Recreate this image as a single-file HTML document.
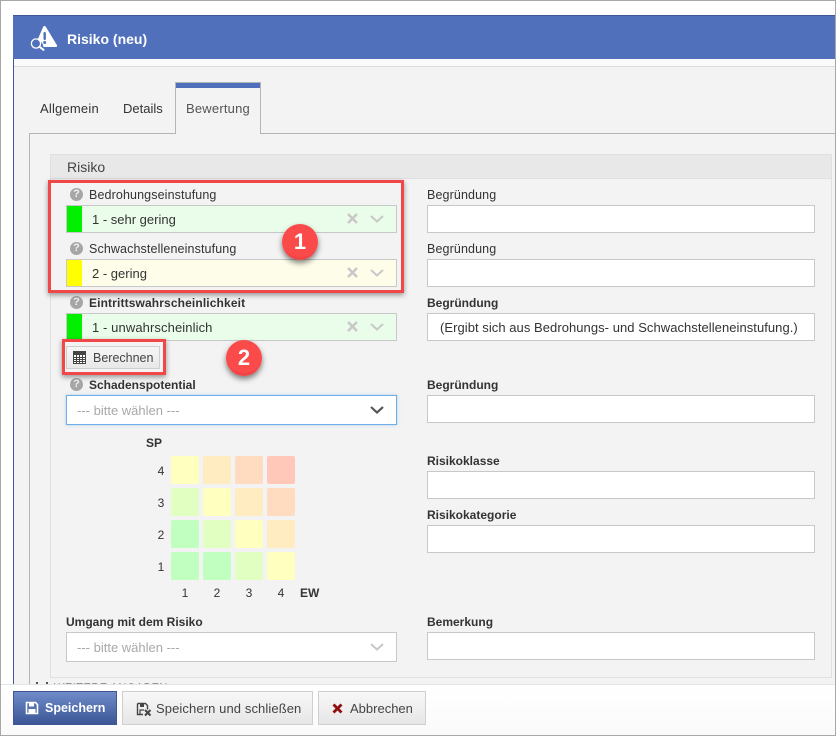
<!DOCTYPE html>
<html lang="de"><head><meta charset="utf-8"><title>Risiko (neu)</title>
<style>
*{box-sizing:border-box}
html,body{margin:0;padding:0;width:836px;height:736px;overflow:hidden;background:#fff}
body{position:relative;font-family:"Liberation Sans",sans-serif;font-size:13px;color:#333}
.a{position:absolute}
.t{position:absolute;white-space:nowrap;line-height:16px}
.lb{font-size:12.5px;color:#333;letter-spacing:.12px}
.b{font-weight:bold;font-size:12px;color:#333}
.in{position:absolute;background:#fff;border:1px solid #c8c8c8;height:28px}
.sel{position:absolute;left:66px;width:331px;height:28px;border:1px solid #c8c8c8}
.sw{position:absolute;left:0;top:0;width:15px;height:26px}
.sel .v{position:absolute;left:25px;top:6px;line-height:16px;font-size:13px;color:#333;white-space:nowrap}
.q{position:absolute;left:70px;width:13px;height:13px;border-radius:50%;background:#a6a6a6;color:#f3f3f3;font:bold 11px/13px "Liberation Sans",sans-serif;text-align:center}
.c{position:absolute;width:28px;height:28px;border-radius:2px}
.n{position:absolute;font-size:12px;line-height:14px;color:#333;width:14px;text-align:center}
.badge{position:absolute;width:36px;height:36px;border-radius:50%;background:radial-gradient(circle at 50% 35%,#fb4a4a 65%,#d92f35 100%);box-shadow:0 3px 6px rgba(0,0,0,.5);color:#fff;font:bold 22px/35px "Liberation Sans",sans-serif;text-align:center}
.btn{position:absolute;top:691px;height:34px;border:1px solid #cfcfcf;background:linear-gradient(#f8f8f8,#e6e6e6);color:#444;font-size:13px;line-height:33px;white-space:nowrap}
</style></head><body>
<!-- outer frame -->
<div class="a" style="left:0;top:0;width:836px;height:736px;border:1px solid #a8a8a8"></div>
<!-- dialog -->
<div class="a" style="left:13px;top:15px;width:822px;height:669px;background:#f3f3f3;border-left:1px solid #3f5595"></div>
<div class="a" style="left:13px;top:15px;width:822px;height:44px;background:#5070bb;border-top:1px solid #3f5595"></div>
<div class="a" style="left:14px;top:59px;width:821px;height:8px;background:#fafafa;border-bottom:1px solid #dcdcdc"></div>
<svg class="a" style="left:30px;top:25px" width="28" height="27" viewBox="0 0 28 27">
<path d="M14.500 1c.6 0 1 .3 1.300.8L27 20.300c.5.800 0 1.700-.9 1.700H13.500a7.500 7.500 0 0 0-6-7L13.200 1.800c.3-.5.700-.8 1.300-.8z" fill="#fff"/>
<rect x="13.500" y="7" width="2.400" height="8" rx="1" fill="#5070bb"/><circle cx="14.700" cy="17.500" r="1.500" fill="#5070bb"/>
<circle cx="6" cy="18.500" r="4.600" fill="none" stroke="#fff" stroke-width="1.300"/><path d="M9.500 21.800l4 3" stroke="#fff" stroke-width="2" stroke-linecap="round"/>
</svg>
<div class="t" style="left:67px;top:31px;font-size:14px;font-weight:bold;color:#fff">Risiko (neu)</div>

<!-- tabs -->
<div class="a" style="left:29px;top:133px;width:806px;height:551px;border-left:1px solid #b5b5b5;border-top:1px solid #b5b5b5"></div>
<div class="a" style="left:175px;top:82px;width:86px;height:52px;background:#f3f3f3;border:1px solid #b5b5b5;border-bottom:none"></div>
<div class="a" style="left:176px;top:83px;width:84px;height:5px;background:#5070bb"></div>
<div class="t" style="left:40px;top:101px;color:#333;letter-spacing:.2px">Allgemein</div>
<div class="t" style="left:123px;top:101px;color:#333">Details</div>
<div class="t" style="left:186px;top:101px;color:#555;letter-spacing:.2px">Bewertung</div>

<!-- behind footer -->
<div class="t" style="left:54px;top:681px;font-size:11px;color:#333;height:3px;overflow:hidden;line-height:14px;letter-spacing:.5px">WEITERE ANGABEN</div>
<div class="a" style="left:36px;top:682px;width:2px;height:2px;background:#555"></div>
<div class="a" style="left:46px;top:682px;width:2px;height:2px;background:#555"></div>

<!-- fieldset -->
<div class="a" style="left:50px;top:154px;width:782px;height:524px;border:1px solid #e0e0e0;background:#f3f3f3"></div>
<div class="a" style="left:51px;top:155px;width:780px;height:24px;background:#e8e8e8;border-bottom:1px solid #e0e0e0"></div>
<div class="t" style="left:67px;top:159px;font-size:14px;color:#444">Risiko</div>

<!-- left col -->
<div class="q" style="top:188px">?</div><div class="t lb" style="left:89px;top:187px">Bedrohungseinstufung</div>
<div class="sel" style="top:205px;background:#eafdea"><div class="sw" style="background:#00f000"></div><div class="v">1 - sehr gering</div>
<svg class="a" style="left:280px;top:7px" width="40" height="12"><path d="M1 1l9 9M10 1l-9 9" stroke="#c8c8c8" stroke-width="2.600"/><path d="M24 3l6 5.500L36 3" fill="none" stroke="#c8c8c8" stroke-width="2"/></svg></div>

<div class="q" style="top:242px">?</div><div class="t lb" style="left:89px;top:241px">Schwachstelleneinstufung</div>
<div class="sel" style="top:259px;background:#fdfdea"><div class="sw" style="background:#ffff00"></div><div class="v">2 - gering</div>
<svg class="a" style="left:280px;top:7px" width="40" height="12"><path d="M1 1l9 9M10 1l-9 9" stroke="#c8c8c8" stroke-width="2.600"/><path d="M24 3l6 5.500L36 3" fill="none" stroke="#c8c8c8" stroke-width="2"/></svg></div>

<div class="q" style="top:296px">?</div><div class="t b" style="left:89px;top:295px;letter-spacing:.13px">Eintrittswahrscheinlichkeit</div>
<div class="sel" style="top:313px;background:#eafdea"><div class="sw" style="background:#00f000"></div><div class="v" style="letter-spacing:.1px">1 - unwahrscheinlich</div>
<svg class="a" style="left:280px;top:7px" width="40" height="12"><path d="M1 1l9 9M10 1l-9 9" stroke="#c8c8c8" stroke-width="2.600"/><path d="M24 3l6 5.500L36 3" fill="none" stroke="#c8c8c8" stroke-width="2"/></svg></div>

<!-- Berechnen -->
<div class="a" style="left:66px;top:346px;width:94px;height:23px;border:1px solid #cfcfcf;background:linear-gradient(#f6f6f6,#e8e8e8)"></div>
<svg class="a" style="left:73px;top:351px" width="13" height="13" viewBox="0 0 13 13"><rect x=".5" y=".5" width="12" height="12" fill="#fff" stroke="#444"/><rect x="1" y="1" width="11" height="3" fill="#444"/><path d="M1 6.500h11M1 8.500h11M1 10.500h11M3.500 4v8M6.500 4v8M9.500 4v8" stroke="#444" stroke-width="1"/></svg>
<div class="t" style="left:93px;top:350px;font-size:12.500px;color:#444">Berechnen</div>

<div class="q" style="top:378px">?</div><div class="t b" style="left:89px;top:377px">Schadenspotential</div>
<div class="sel" style="top:395px;height:30px;background:#fff;border-color:#6eaee8;box-shadow:0 0 3px rgba(110,174,232,.5)"><div class="v" style="left:10px;top:7px;color:#a8a8a8">--- bitte wählen ---</div>
<svg class="a" style="left:302px;top:9px" width="16" height="10"><path d="M2 2l6 5.500L14 2" fill="none" stroke="#555" stroke-width="2.200"/></svg></div>

<!-- matrix -->
<div class="t b" style="left:146px;top:435px;font-size:12px">SP</div>
<div class="n" style="left:154px;top:464px">4</div><div class="n" style="left:154px;top:496px">3</div><div class="n" style="left:154px;top:528px">2</div><div class="n" style="left:154px;top:560px">1</div>
<div class="c" style="left:171px;top:456px;background:#ffffc0"></div><div class="c" style="left:203px;top:456px;background:#ffecc0"></div><div class="c" style="left:235px;top:456px;background:#ffdcc0"></div><div class="c" style="left:267px;top:456px;background:#ffc8b8"></div>
<div class="c" style="left:171px;top:488px;background:#e0ffc0"></div><div class="c" style="left:203px;top:488px;background:#ffffc0"></div><div class="c" style="left:235px;top:488px;background:#ffecc0"></div><div class="c" style="left:267px;top:488px;background:#ffdcc0"></div>
<div class="c" style="left:171px;top:520px;background:#c0ffc0"></div><div class="c" style="left:203px;top:520px;background:#e0ffc0"></div><div class="c" style="left:235px;top:520px;background:#ffffc0"></div><div class="c" style="left:267px;top:520px;background:#ffecc0"></div>
<div class="c" style="left:171px;top:552px;background:#c0ffc0"></div><div class="c" style="left:203px;top:552px;background:#c0ffc0"></div><div class="c" style="left:235px;top:552px;background:#e0ffc0"></div><div class="c" style="left:267px;top:552px;background:#ffffc0"></div>
<div class="n" style="left:178px;top:586px">1</div><div class="n" style="left:210px;top:586px">2</div><div class="n" style="left:242px;top:586px">3</div><div class="n" style="left:274px;top:586px">4</div>
<div class="t b" style="left:300px;top:585px;font-size:12px">EW</div>

<div class="t b" style="left:66px;top:614px">Umgang mit dem Risiko</div>
<div class="sel" style="top:632px;height:30px;background:#fff"><div class="v" style="left:10px;top:7px;color:#a8a8a8">--- bitte wählen ---</div>
<svg class="a" style="left:302px;top:9px" width="16" height="10"><path d="M2 2l6 5.500L14 2" fill="none" stroke="#c8c8c8" stroke-width="2"/></svg></div>

<!-- right col -->
<div class="t lb" style="left:427px;top:187px">Begründung</div><div class="in" style="left:427px;top:205px;width:388px"></div>
<div class="t lb" style="left:427px;top:241px">Begründung</div><div class="in" style="left:427px;top:259px;width:388px"></div>
<div class="t b" style="left:427px;top:295px">Begründung</div><div class="in" style="left:427px;top:313px;width:388px"><div class="t" style="left:12px;top:6px;font-size:13px;letter-spacing:.05px;color:#333">(Ergibt sich aus Bedrohungs- und Schwachstelleneinstufung.)</div></div>
<div class="t b" style="left:427px;top:377px">Begründung</div><div class="in" style="left:427px;top:395px;width:388px"></div>
<div class="t b" style="left:427px;top:453px">Risikoklasse</div><div class="in" style="left:427px;top:471px;width:388px"></div>
<div class="t b" style="left:427px;top:507px">Risikokategorie</div><div class="in" style="left:427px;top:525px;width:388px"></div>
<div class="t b" style="left:427px;top:614px">Bemerkung</div><div class="in" style="left:427px;top:632px;width:388px"></div>

<!-- annotations -->
<div class="a" style="left:48px;top:180px;width:356px;height:113px;border:3px solid #f04848;box-shadow:0 2px 5px rgba(0,0,0,.4)"></div>
<div class="a" style="left:62px;top:339px;width:104px;height:36px;border:3px solid #f04848;box-shadow:0 2px 5px rgba(0,0,0,.4)"></div>
<div class="badge" style="left:282px;top:224px">1</div>
<div class="badge" style="left:226px;top:340px">2</div>

<!-- footer -->
<div class="a" style="left:1px;top:684px;width:834px;height:51px;background:linear-gradient(#fff,#fafafa);border-top:1px solid #e4e4e4"></div>
<div class="btn" style="left:13px;width:104px;background:linear-gradient(#6f8bc8,#3c5696);border-color:#3f5595;color:#fff;font-weight:bold;font-size:12.500px;padding-left:31px">Speichern</div>
<svg class="a" style="left:25px;top:701px" width="14" height="14" viewBox="0 0 14 14"><path d="M1.500 1.500h9l2 2v9h-11z" fill="none" stroke="#fff" stroke-width="1.600"/><rect x="4" y="2" width="5" height="3.500" fill="#fff"/><rect x="3.500" y="8" width="7" height="4" fill="#fff"/></svg>
<div class="btn" style="left:122px;width:191px;padding-left:33px;letter-spacing:.1px">Speichern und schließen</div>
<svg class="a" style="left:136px;top:702px" width="16" height="15" viewBox="0 0 16 15"><path d="M1.500 1.500h8l2 2v4M7 12.500H1.500v-11" fill="none" stroke="#444" stroke-width="1.400"/><rect x="4" y="2" width="4" height="3" fill="#444"/><path d="M4 12V8h4" fill="none" stroke="#444" stroke-width="1.200"/><path d="M9 8l5.500 5.500M14.500 8L9 13.500" stroke="#444" stroke-width="2"/></svg>
<div class="btn" style="left:318px;width:108px;padding-left:31px">Abbrechen</div>
<svg class="a" style="left:332px;top:703px" width="11" height="11" viewBox="0 0 11 11"><path d="M1.500 1.500l8 8M9.500 1.500l-8 8" stroke="#8f0f0f" stroke-width="2.800"/></svg>
</body></html>
